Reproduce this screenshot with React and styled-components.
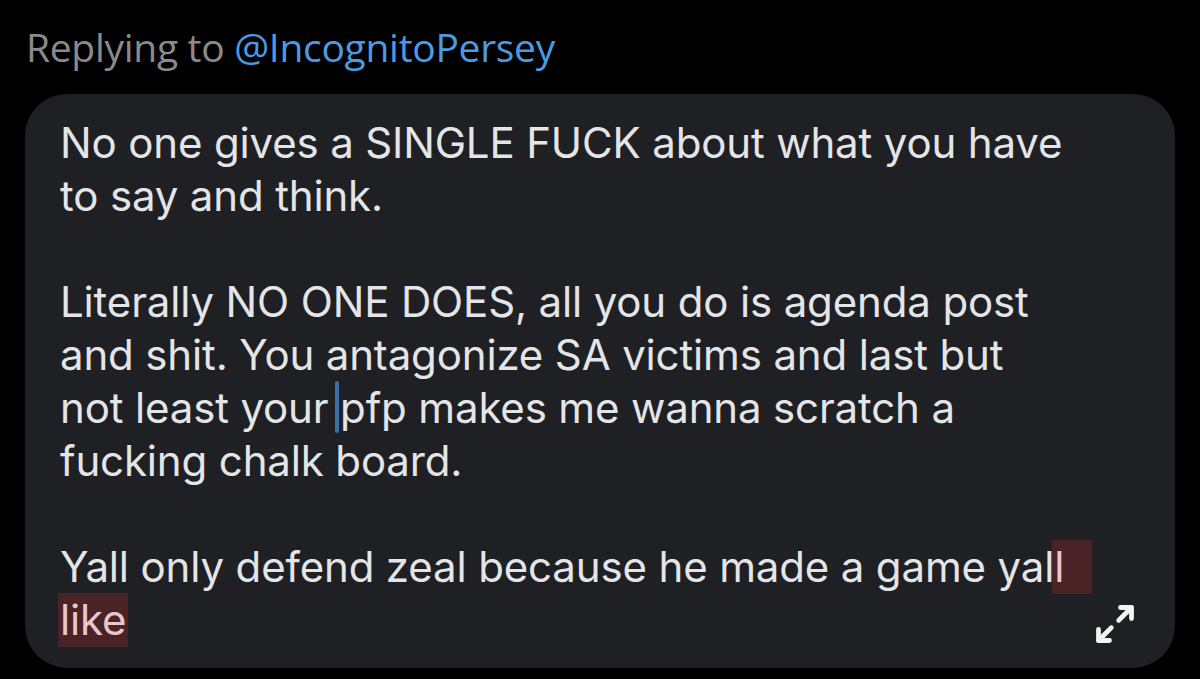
import React from "react";
import styled, { createGlobalStyle } from "styled-components";
import { Maximize2 } from "lucide-react";

const GlobalStyle = createGlobalStyle`
  html, body {
    margin: 0;
    padding: 0;
    background: #000;
  }
  body {
    width: 1200px;
    height: 679px;
    overflow: hidden;
  }
`;

const lines = [
  "No one gives a SINGLE FUCK about what you have",
  "to say and think.",
  "",
  "Literally NO ONE DOES, all you do is agenda post",
  "and shit. You antagonize SA victims and last but",
];

const App = () => {
  return (
    <>
      <GlobalStyle />
      <Page>
        <ReplyLine>
          Replying to <Handle>@IncognitoPersey</Handle>
        </ReplyLine>
        <Card>
          <Body>
            {lines.map((line, idx) => (
              <Line key={idx}>{line || "\u00a0"}</Line>
            ))}
            <Line>
              not least your <Caret />pfp makes me wanna scratch a
            </Line>
            <Line>fucking chalk board.</Line>
            <Line>{"\u00a0"}</Line>
            <Line>
              Yall only defend zeal because he made a game yal
              <Mark tail>l</Mark>
            </Line>
            <Line>
              <Mark>like</Mark>
            </Line>
          </Body>
          <ExpandBtn>
            <Maximize2 size={44} strokeWidth={2.6} />
          </ExpandBtn>
        </Card>
      </Page>
    </>
  );
};

export default App;

const Page = styled.div`
  display: flex;
  flex-direction: column;
  padding: 24px 25px 0 25px;
`;

const ReplyLine = styled.div`
  font-family: "Open Sans", "Liberation Sans", sans-serif;
  font-size: 39px;
  line-height: 46px;
  color: #8a8a8c;
  padding-left: 1px;
  letter-spacing: -0.3px;
`;

const Handle = styled.span`
  color: #4a9be3;
`;

const Card = styled.div`
  position: relative;
  margin-top: 24px;
  width: 1150px;
  height: 574px;
  box-sizing: border-box;
  background: #1f2023;
  border-radius: 42px;
  padding: 22px 0 0 35px;
`;

const Body = styled.div`
  font-family: Inter, "Liberation Sans", Arial, sans-serif;
  font-size: 42px;
  line-height: 53px;
  letter-spacing: -0.15px;
  color: #e4e5e7;
`;

const Line = styled.div`
  white-space: pre;
  height: 53px;
`;

const Caret = styled.span`
  display: inline-block;
  width: 4px;
  height: 52px;
  margin-left: -5px;
  margin-right: 1px;
  vertical-align: top;
  background: #3b6fa8;
  border-radius: 2px;
`;

const Mark = styled.span`
  display: inline-block;
  height: 54px;
  vertical-align: top;
  background: #4a2327;
  color: #e9c6ca;
  padding: 0 ${(props) => (props.tail ? "28px" : "2px")} 0 2px;
  margin-left: -2px;
`;

const ExpandBtn = styled.div`
  position: absolute;
  right: 38px;
  bottom: 22px;
  color: #f4f4f5;
  display: flex;
`;
